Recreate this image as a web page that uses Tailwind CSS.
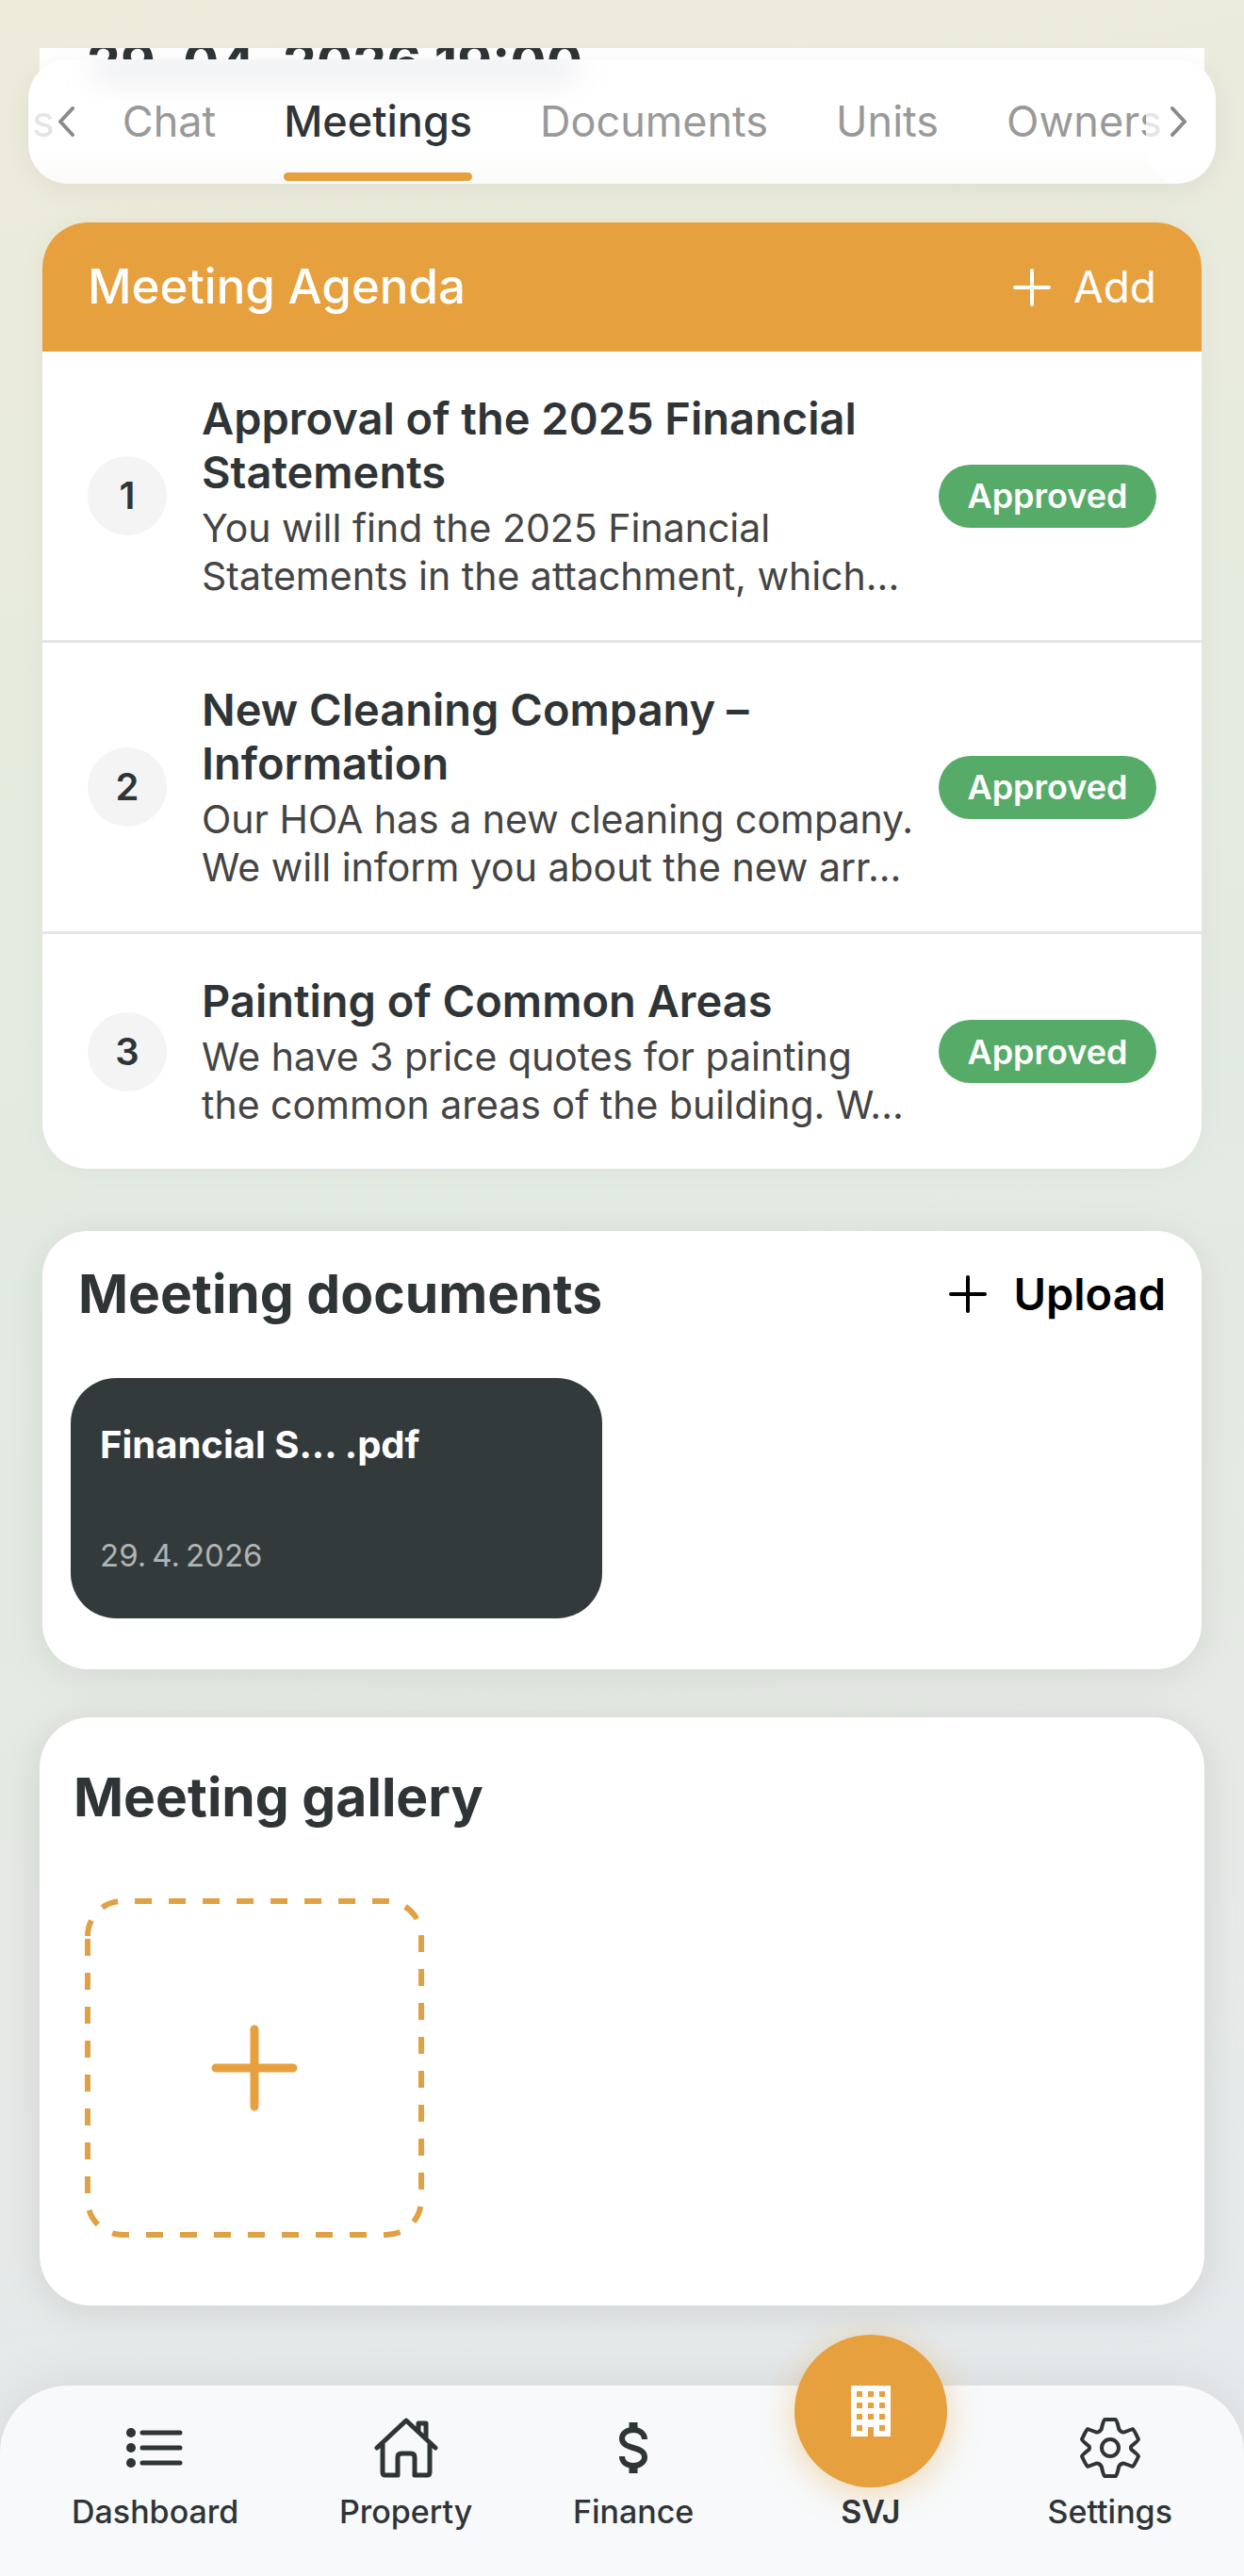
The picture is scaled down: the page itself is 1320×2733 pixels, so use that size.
<!DOCTYPE html>
<html lang="en">
<head>
    <meta charset="UTF-8">
    <meta name="viewport" content="width=device-width, initial-scale=1.0">
    <title>SVJ - Meetings</title>
    <script src="https://cdn.jsdelivr.net/npm/@tailwindcss/browser@4"></script>
</head>
<body class="min-h-screen flex flex-col font-[Inter,sans-serif] text-[#2f3437] bg-[linear-gradient(170deg,#eeebdb_0%,#e8ebde_20%,#e2ebe1_46%,#e6e9e5_68%,#e6eaee_100%)]">
    <!-- Scrolling content -->
    <main class="grow px-[30px] pt-[51px]">
        <!-- Tail of the meeting date card, tucked under the tab bar -->
        <section class="mx-3 h-3 overflow-hidden bg-white px-[50px]">
            <h1 class="-mt-3 text-[57px] leading-[56px] font-bold whitespace-nowrap">29. 04. 2026 19:00</h1>
        </section>

        <!-- Tabs -->
        <div class="relative">
            <div class="absolute inset-x-3 top-0 h-10 bg-white"></div>
            <nav class="relative h-[132px] overflow-hidden rounded-[42px] bg-linear-to-b from-white from-70% to-[#fafaf8] shadow-[0_6px_30px_rgba(0,0,0,0.06)]">
                <div class="absolute top-0 left-[70px] h-5 w-[510px] bg-gray-400/25 blur-lg"></div>
                <div class="relative flex h-full items-stretch gap-[72px] pl-1 text-[45px] leading-[44px] text-[#999] whitespace-nowrap">
                    <a href="#" class="pt-11 text-[#e4e4e4]">s</a>
                    <a href="#" class="pt-11">Chat</a>
                    <a href="#" class="flex flex-col justify-between pt-11 pb-[3px] font-medium text-[#2f3437]">Meetings<span class="h-[9px] rounded-full bg-[#e6a03e]"></span></a>
                    <a href="#" class="pt-11">Documents</a>
                    <a href="#" class="pt-11">Units</a>
                    <a href="#" class="pt-11">Owners</a>
                </div>
                <button type="button" aria-label="Previous tabs" class="absolute inset-y-0 left-0 flex w-[72px] items-center justify-end pr-[22px] text-[#8a8a8a]">
                    <svg class="h-8 w-5" viewBox="0 0 20 32" fill="none" stroke="currentColor" stroke-width="4" stroke-linecap="round" stroke-linejoin="round"><path d="M17 2 4 16l13 14"/></svg>
                </button>
                <button type="button" aria-label="More tabs" class="absolute inset-y-0 right-0 flex w-[74px] items-center justify-start rounded-[42px] bg-white/75 pl-[25px] text-[#8a8a8a]">
                    <svg class="h-8 w-5" viewBox="0 0 20 32" fill="none" stroke="currentColor" stroke-width="4" stroke-linecap="round" stroke-linejoin="round"><path d="M3 2l13 14L3 30"/></svg>
                </button>
            </nav>
        </div>

        <!-- Agenda -->
        <section class="mx-[15px] mt-[41px] overflow-hidden rounded-[48px] bg-white shadow-[0_0_30px_rgba(0,0,0,0.04)]">
            <header class="flex h-[137px] items-center justify-between bg-[#e6a03e] px-12 text-white">
                <h2 class="text-[51px] font-medium">Meeting Agenda</h2>
                <button type="button" class="flex items-center gap-6 text-[46px]">
                    <svg class="size-10" viewBox="0 0 40 40" fill="none" stroke="currentColor" stroke-width="4" stroke-linecap="round"><path d="M20 2v36M2 20h36"/></svg>
                    Add
                </button>
            </header>
            <ul class="divide-y-3 divide-[#e5e5e5]">
                <li class="flex items-center px-12 py-[42px]">
                    <span class="flex size-[84px] shrink-0 items-center justify-center rounded-full bg-[#f4f4f4] text-[40px] font-semibold">1</span>
                    <div class="ml-[37px] min-w-0 flex-1">
                        <h3 class="text-[47px] leading-[57px] font-semibold">Approval of the 2025 Financial<br>Statements</h3>
                        <p class="mt-1.5 text-[41px] leading-[51px] whitespace-nowrap text-[#444]">You will find the 2025 Financial<br>Statements in the attachment, which...</p>
                    </div>
                    <span class="flex h-[67px] w-[231px] shrink-0 items-center justify-center rounded-full bg-[#57ab69] text-[36px] font-semibold text-white">Approved</span>
                </li>
                <li class="flex items-center px-12 py-[42px]">
                    <span class="flex size-[84px] shrink-0 items-center justify-center rounded-full bg-[#f4f4f4] text-[40px] font-semibold">2</span>
                    <div class="ml-[37px] min-w-0 flex-1">
                        <h3 class="text-[47px] leading-[57px] font-semibold">New Cleaning Company –<br>Information</h3>
                        <p class="mt-1.5 text-[41px] leading-[51px] whitespace-nowrap text-[#444]">Our HOA has a new cleaning company.<br>We will inform you about the new arr...</p>
                    </div>
                    <span class="flex h-[67px] w-[231px] shrink-0 items-center justify-center rounded-full bg-[#57ab69] text-[36px] font-semibold text-white">Approved</span>
                </li>
                <li class="flex items-center px-12 py-[42px]">
                    <span class="flex size-[84px] shrink-0 items-center justify-center rounded-full bg-[#f4f4f4] text-[40px] font-semibold">3</span>
                    <div class="ml-[37px] min-w-0 flex-1">
                        <h3 class="text-[47px] leading-[57px] font-semibold">Painting of Common Areas</h3>
                        <p class="mt-1.5 text-[41px] leading-[51px] whitespace-nowrap text-[#444]">We have 3 price quotes for painting<br>the common areas of the building. W...</p>
                    </div>
                    <span class="flex h-[67px] w-[231px] shrink-0 items-center justify-center rounded-full bg-[#57ab69] text-[36px] font-semibold text-white">Approved</span>
                </li>
            </ul>
        </section>

        <!-- Documents -->
        <section class="mx-[15px] mt-[66px] rounded-[48px] bg-white px-[30px] pt-8 pb-[54px] shadow-[0_6px_40px_rgba(0,0,0,0.08)]">
            <header class="flex h-[70px] items-center justify-between px-2">
                <h2 class="text-[57px] font-bold">Meeting documents</h2>
                <button type="button" class="flex items-center gap-7 text-[47px] font-semibold text-black">
                    <svg class="size-10" viewBox="0 0 40 40" fill="none" stroke="currentColor" stroke-width="4" stroke-linecap="round"><path d="M20 2v36M2 20h36"/></svg>
                    Upload
                </button>
            </header>
            <a href="#" class="mt-[54px] flex h-[255px] w-[564px] flex-col justify-between rounded-[48px] bg-[#323a3b] px-[31px] pt-[46px] pb-[42px] text-white">
                <span class="text-[40px] leading-[50px] font-bold">Financial S... .pdf</span>
                <time datetime="2026-04-29" class="text-[33px] leading-[50px] text-[#b0b3b3]">29.&#8201;4.&#8201;2026</time>
            </a>
        </section>

        <!-- Gallery -->
        <section class="mx-3 mt-[51px] rounded-[54px] bg-white px-12 pt-[50px] pb-[72px] shadow-[0_6px_40px_rgba(0,0,0,0.1)]">
            <h2 class="-ml-3 text-[57px] leading-[70px] font-bold">Meeting gallery</h2>
            <button type="button" aria-label="Add photo" class="mt-[72px] block text-[#e0a044]">
                <svg class="size-[360px]" viewBox="0 0 360 360" fill="none" stroke="currentColor">
                    <path d="M3 43v277a37 37 0 0 0 37 37h280a37 37 0 0 0 37-37V40a37 37 0 0 0-37-37H40A37 37 0 0 0 3 40" stroke-width="6" stroke-dasharray="18 18"/>
                    <path d="M180 139v82M139 180h82" stroke="#e6a03e" stroke-width="9" stroke-linecap="round"/>
                </svg>
            </button>
        </section>
    </main>

    <!-- Bottom navigation -->
    <nav class="mt-[85px] flex h-[202px] items-end justify-between rounded-t-[72px] bg-[#f7f9fa] px-[76px] pb-12 text-[34px] leading-10 font-medium shadow-[0_0_60px_rgba(0,0,0,0.08)]">
        <a href="#" class="flex flex-col items-center gap-4">
            <svg class="size-16" viewBox="0 0 64 64" fill="none" stroke="currentColor" stroke-width="5" stroke-linecap="round"><path d="M18 16h40M18 32h40M18 48h40"/><g fill="currentColor" stroke="none"><circle cx="6" cy="16" r="5"/><circle cx="6" cy="32" r="5"/><circle cx="6" cy="48" r="5"/></g></svg>
            Dashboard
        </a>
        <a href="#" class="flex flex-col items-center gap-4">
            <svg class="h-16 w-[68px]" viewBox="0 0 68 64" fill="none" stroke="currentColor" stroke-width="5" stroke-linecap="round" stroke-linejoin="round"><path d="M3 32 34 3l31 29M9 27v31q0 3 3 3h13V42q0-4 4-4h10q4 0 4 4v19h13q3 0 3-3V27M47 14V6h8v16"/></svg>
            Property
        </a>
        <a href="#" class="flex flex-col items-center gap-4">
            <svg class="size-16" viewBox="0 0 64 64" fill="none" stroke="currentColor" stroke-width="6"><path d="M32 5v8M32 51v8" stroke-width="9"/><path d="M44 23c0-6-5-10-12-10s-12 4-12 9c0 13 24 7 24 20 0 5-5 9-12 9s-12-4-12-10"/></svg>
            Finance
        </a>
        <a href="#" class="flex w-[162px] flex-col items-center gap-1.5 font-semibold">
            <span class="flex size-[162px] items-center justify-center rounded-full bg-[#e6a03e] text-white shadow-[0_6px_36px_rgba(229,160,62,0.4)]">
                <svg class="h-[54px] w-[42px]" viewBox="0 0 42 54" fill="currentColor" fill-rule="evenodd"><path d="M0 0h42v54H24V44h-6v10H0zM6 6v6h6V6zm12 0v6h6V6zm12 0v6h6V6zM6 18v6h6v-6zm12 0v6h6v-6zm12 0v6h6v-6zM6 30v6h6v-6zm12 0v6h6v-6zm12 0v6h6v-6zM6 42v6h6v-6zm24 0v6h6v-6z"/></svg>
            </span>
            SVJ
        </a>
        <a href="#" class="flex flex-col items-center gap-4">
            <svg class="size-16" viewBox="0 0 64 64" fill="none" stroke="currentColor" stroke-width="4" stroke-linejoin="round"><path d="M26 2h12q1 0 3 9 0 2 3 4 2 1 4 0l8-3q1 0 6 11 0 1-6 6-2 1-2 3t2 3q6 5 6 6-5 11-6 11l-8-3q-2-1-4 0-3 2-3 4-2 9-3 9H26q-1 0-3-9 0-2-3-4-2-1-4 0l-8 3q-1 0-6-11 0-1 6-6 2-1 2-3t-2-3q-6-5-6-6 5-11 6-11l8 3q2 1 4 0 3-2 3-4 2-9 3-9z"/><circle cx="32" cy="32" r="9"/></svg>
            Settings
        </a>
    </nav>
</body>
</html>
